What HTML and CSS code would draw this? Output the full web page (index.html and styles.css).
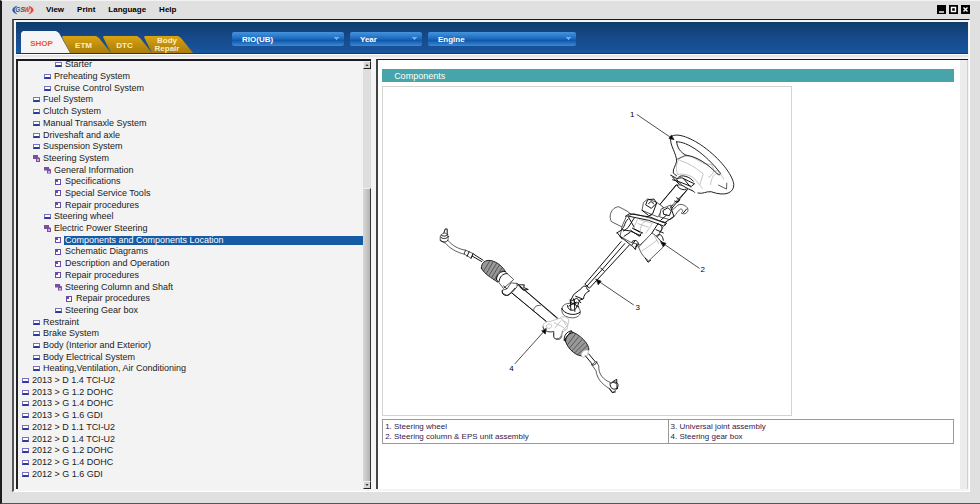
FILE: index.html
```
<!DOCTYPE html>
<html lang="en">
<head>
    <meta charset="UTF-8">
    <meta name="viewport" content="width=device-width, initial-scale=1.0">
    <title>GSW - RIO(UB)</title>
    <link rel="stylesheet" href="styles.css">
</head>
<body>
    <div class="window">
        <header class="menubar">
            <svg class="logo" viewBox="0 0 66 30" role="img" aria-label="GSW">
                <path d="M15 3 C-3 9 -3 21 15 27 C5 20 5 10 15 3z" fill="#2a4f9e" stroke="#2a4f9e"/>
                <path d="M50 3 C69 9 69 21 50 27 C60 20 60 10 50 3z" fill="#e0453a" stroke="#e0453a"/>
                <text class="logo-blue" x="10" y="22">GS</text>
                <text class="logo-red" x="36" y="22">W</text>
            </svg>
            <nav class="menu">
                <a href="#">View</a>
                <a href="#">Print</a>
                <a href="#">Language</a>
                <a href="#">Help</a>
            </nav>
            <div class="window-buttons">
                <button aria-label="Minimize"><svg viewBox="0 0 9 9"><path d="M2 7h5"/></svg></button>
                <button aria-label="Maximize"><svg viewBox="0 0 9 9"><path d="M2.5 2.5h4v4h-4z"/></svg></button>
                <button aria-label="Close"><svg viewBox="0 0 9 9"><path d="M2.5 2.5l4 4M6.5 2.5l-4 4"/></svg></button>
            </div>
        </header>

        <div class="frame">
            <div class="toolbar">
                <nav class="tabs">
                    <a class="tab active" href="#">SHOP</a>
                    <a class="tab" href="#">ETM</a>
                    <a class="tab" href="#">DTC</a>
                    <a class="tab two-lines" href="#">Body<br>Repair</a>
                </nav>
                <form class="filters">
                    <select class="model" aria-label="Model"><option>RIO(UB)</option></select>
                    <select class="year" aria-label="Year"><option>Year</option></select>
                    <select class="engine" aria-label="Engine"><option>Engine</option></select>
                </form>
            </div>

            <div class="panels">
                <aside class="sidebar">
                    <ul class="tree">
                        <li class="level-3 book"><a href="#">Starter</a></li>
                        <li class="level-2 book"><a href="#">Preheating System</a></li>
                        <li class="level-2 book"><a href="#">Cruise Control System</a></li>
                        <li class="level-1 book"><a href="#">Fuel System</a></li>
                        <li class="level-1 book"><a href="#">Clutch System</a></li>
                        <li class="level-1 book"><a href="#">Manual Transaxle System</a></li>
                        <li class="level-1 book"><a href="#">Driveshaft and axle</a></li>
                        <li class="level-1 book"><a href="#">Suspension System</a></li>
                        <li class="level-1 open"><a href="#">Steering System</a></li>
                        <li class="level-2 open"><a href="#">General Information</a></li>
                        <li class="level-3 page"><a href="#">Specifications</a></li>
                        <li class="level-3 page"><a href="#">Special Service Tools</a></li>
                        <li class="level-3 page"><a href="#">Repair procedures</a></li>
                        <li class="level-2 book"><a href="#">Steering wheel</a></li>
                        <li class="level-2 open"><a href="#">Electric Power Steering</a></li>
                        <li class="level-3 page selected"><a href="#">Components and Components Location</a></li>
                        <li class="level-3 page"><a href="#">Schematic Diagrams</a></li>
                        <li class="level-3 page"><a href="#">Description and Operation</a></li>
                        <li class="level-3 page"><a href="#">Repair procedures</a></li>
                        <li class="level-3 open"><a href="#">Steering Column and Shaft</a></li>
                        <li class="level-4 page"><a href="#">Repair procedures</a></li>
                        <li class="level-3 book"><a href="#">Steering Gear box</a></li>
                        <li class="level-1 book"><a href="#">Restraint</a></li>
                        <li class="level-1 book"><a href="#">Brake System</a></li>
                        <li class="level-1 book"><a href="#">Body (Interior and Exterior)</a></li>
                        <li class="level-1 book"><a href="#">Body Electrical System</a></li>
                        <li class="level-1 book"><a href="#">Heating,Ventilation, Air Conditioning</a></li>
                        <li class="level-0 book"><a href="#">2013 &gt; D 1.4 TCI-U2</a></li>
                        <li class="level-0 book"><a href="#">2013 &gt; G 1.2 DOHC</a></li>
                        <li class="level-0 book"><a href="#">2013 &gt; G 1.4 DOHC</a></li>
                        <li class="level-0 book"><a href="#">2013 &gt; G 1.6 GDI</a></li>
                        <li class="level-0 book"><a href="#">2012 &gt; D 1.1 TCI-U2</a></li>
                        <li class="level-0 book"><a href="#">2012 &gt; D 1.4 TCI-U2</a></li>
                        <li class="level-0 book"><a href="#">2012 &gt; G 1.2 DOHC</a></li>
                        <li class="level-0 book"><a href="#">2012 &gt; G 1.4 DOHC</a></li>
                        <li class="level-0 book"><a href="#">2012 &gt; G 1.6 GDI</a></li>
                    </ul>
                    <div class="scrollbar">
                        <button aria-label="Scroll up"><svg viewBox="0 0 8 8"><path d="M2 5h4L4 3z"/></svg></button>
                        <div class="track"><div class="thumb"></div></div>
                        <button aria-label="Scroll down"><svg viewBox="0 0 8 8"><path d="M2 3h4L4 5z"/></svg></button>
                    </div>
                </aside>

                <main class="content">
                    <div class="document">
                        <h1>Components</h1>
                        <svg class="diagram" viewBox="0 0 1227 987" role="img" aria-label="Steering system components">
                            <!-- steering wheel, column and EPS unit -->
                            <g transform="translate(621 9)">
                                <path class="soft" d="M270 207 C282 198 300 196 315 205 L345 222 L366 224 M270 207 C260 222 258 240 266 254 M366 224 C380 238 372 258 358 262 M376 244 C384 240 394 246 396 256 L404 268 M272 212 C300 220 320 235 342 252 L332 284 M266 254 C280 250 310 256 320 272 L340 296 M364 284 C366 262 378 248 388 250"/>
                                <path class="rim" d="M244 142 C256 126 300 140 342 170 C392 206 430 254 434 284 C435 308 410 322 366 306 C350 304 342 314 326 310 M244 142 C240 166 262 190 262 214 C260 228 250 236 252 250 L262 258"/>
                                <path class="rim" d="M262 156 C294 154 350 194 392 248 C396 254 390 258 384 252 C356 222 322 200 290 196 C274 188 264 174 262 156z"/>
                                <path class="line" d="M264 208 L290 196 M388 286 L412 298 L413 280"/>
                                <path class="bold" d="M244 256 L262 266 L278 264 L298 274 L316 282 L306 290 L290 284 L270 276 L250 270 M268 262 C276 252 304 262 312 274 M262 268 C270 286 294 296 312 304 L316 308 M284 268 L304 292 M250 262 L270 284"/>
                                <path class="line" fill="#fff" d="M262 286 L210 346 L234 362 L294 300 C286 288 274 284 262 286z"/>
                                <path class="bold" d="M260 286 L184 378 M294 300 L226 382 M264 286 C266 296 276 300 290 300 M262 324 L272 330 L266 338 L256 334"/>
                                <path class="line" fill="#fff" d="M176 328 L202 338 L222 352 L206 382 L158 362 L162 340z"/>
                                <path class="bold" d="M176 330 L194 328 L202 340 L186 356 L170 346z M178 342 C180 334 192 334 192 342 M202 340 L190 372 L172 382 M158 362 L176 376"/>
                                <path class="line" fill="#fff" d="M216 358 L244 346 L250 360 L262 350 C270 338 292 346 296 358 C298 370 284 376 276 370 C282 366 282 358 274 358 C262 364 258 384 242 390 L212 382z"/>
                                <path class="bold" d="M222 362 L236 354 L246 364 L240 378 L224 374z M244 352 L254 380 L228 398 M232 376 L214 392 M282 370 L292 358 M246 350 L250 346"/>
                                <path class="line" fill="#fff" d="M116 366 L88 351 C66 352 56 380 66 396 L106 416 L128 382z"/>
                                <path class="line" fill="#fff" d="M112 380 L132 372 L178 384 L228 400 L218 418 L202 446 L184 438 L152 466 L124 458 L92 440 L98 410z"/>
                                <path class="bold" d="M108 380 L120 372 L182 382 L222 398 M120 380 L178 392 L220 408 M134 386 C124 400 116 420 102 424 M116 388 C104 398 106 414 98 418 M82 430 L98 420 L122 424 L154 438 M92 440 L126 468 L138 452 M122 428 L104 440 M130 416 L160 430 M124 422 L150 440 L156 430 L130 416 M220 396 L232 400 L226 408 M84 430 L98 448 M128 468 L138 480 L142 464 M116 380 L134 412"/>
                                <path class="soft" d="M144 390 L132 416 M170 392 C154 404 150 418 154 430 M190 400 L170 430 M150 390 L186 400 M146 402 L176 412"/>
                                <path class="bold" d="M184 436 L206 402 C220 408 222 416 212 428 M200 420 L222 430 M202 438 C214 430 220 438 222 452 M192 434 L226 464"/>
                                <path class="line" fill="#fff" d="M148 472 L188 430 C200 438 218 454 222 472 L178 514 C164 504 154 492 148 472z"/>
                                <path class="soft" d="M158 484 C176 472 188 464 202 452 M196 440 L208 462"/>
                                <path class="bold" d="M128 456 C136 448 150 454 146 468 L138 472 M168 506 L176 518 L184 512"/>
                            </g>

                            <!-- intermediate shaft, boot and right tie rod -->
                            <g transform="translate(441 489)">
                                <path class="bold" fill="#fff" d="M275 -24 L166 104 L180 116 L300 -14"/>
                                <path class="bold" d="M286 -18 L218 60 L172 110 M214 56 L224 64"/>
                                <path class="bold" fill="#fff" d="M156 116 C160 106 174 108 172 118 L180 124 C170 128 162 138 162 148 L150 152 L142 178 L122 174 L124 152 L132 136z"/>
                                <path class="bold" d="M126 154 L142 146 L154 160 M132 148 L140 174 M122 158 L148 172 M138 140 L158 148 M128 162 L144 160"/>
                                <path class="line" fill="#fff" d="M97 178 C98 164 116 158 132 164 C146 168 154 182 152 192 C148 206 126 208 112 202 C100 198 96 190 97 178z"/>
                                <path class="bold" d="M97 178 C104 194 136 202 152 188 M114 168 C112 184 140 190 142 170 M122 150 L124 182 M134 150 L136 186 M118 170 L140 158"/>
                                <path class="soft" fill="#fff" d="M94 204 C100 198 116 204 118 212 L112 240 L92 252 L78 234 L90 230z"/>
                                <path class="soft" d="M90 216 C96 210 110 216 114 224 M86 232 L108 240 M82 228 L98 246"/>
                                <path class="line" fill="#fff" d="M72 250 L74 264 C80 274 94 272 96 262 L98 246"/>
                                <path class="boot" d="M106 270 L124 246 C150 254 180 284 178 302 L156 320 C132 316 112 294 106 270z"/>
                                <path class="bold" d="M104 274 C102 258 112 246 126 244 M108 276 C108 262 116 252 130 250"/>
                                <path class="ribs" d="M114 286 L138 254 M120 296 L148 262 M128 304 L158 270 M136 310 L166 280 M144 316 L174 288"/>
                                <path class="soft" fill="#fff" d="M156 320 C152 308 168 298 178 304 L174 318 L162 324z"/>
                                <path class="bold" d="M168 320 L188 344 M178 314 L198 338"/>
                                <path class="line" fill="#fff" d="M188 346 L200 336 L208 350 C206 374 222 392 244 400 L250 398 L262 404 L262 420 L250 430 L240 418 C216 404 202 386 200 366z"/>
                                <path class="bold" d="M242 402 C240 416 252 426 264 416 M246 402 C250 394 264 398 266 406 L264 418 M252 396 L262 390 L262 402 M240 418 L248 430 L258 428 M186 346 C190 350 200 346 202 338"/>
                            </g>

                            <!-- left tie rod and gear box -->
                            <g transform="translate(141 369)">
                                <path class="line" fill="#fff" d="M31 92 C30 78 34 72 44 70 C56 72 56 84 54 92 C70 110 86 118 108 122 L104 134 C78 128 58 114 48 102z"/>
                                <path class="bold" d="M42 70 L46 58 L52 58 L52 72 M32 82 C38 90 50 88 56 80 M32 92 C40 100 50 98 54 92 M34 76 C40 82 50 80 54 74"/>
                                <path class="line" fill="#fff" d="M108 122 L130 132 L124 146 L104 134z"/>
                                <path class="bold" d="M118 126 L112 140 M130 132 L124 146 M128 140 L156 156 M132 134 L160 152"/>
                                <path class="boot" d="M155 176 C154 160 166 150 184 153 C204 158 220 172 228 188 L204 218 C184 204 164 194 155 176z"/>
                                <path class="ribs" d="M162 184 L180 154 M170 192 L190 156 M178 198 L200 162 M186 204 L208 168 M194 210 L216 176"/>
                                <path class="line" fill="#fff" d="M200 208 C198 194 212 180 226 186 L252 210 L222 236z"/>
                                <path class="bold" d="M200 210 C202 194 212 184 226 186 M208 216 C210 202 218 192 232 192"/>
                                <path class="line" fill="#fff" d="M266 226 L386 330 L362 346 L246 250z"/>
                                <path class="bold" d="M222 230 L362 346 M262 222 L384 326"/>
                                <path class="line" d="M312 304 C312 292 322 286 332 288"/>
                                <path class="line" fill="#fff" d="M218 242 L232 238 L244 220 L262 222 L262 232 L248 248 L232 258 L220 252z"/>
                                <path class="bold" d="M218 244 C214 254 228 262 238 256 L256 236 M268 226 L284 226 L282 234 L296 240 L280 242 L270 232"/>
                                <path class="soft" fill="#fff" d="M341 354 C336 344 350 334 362 336 L392 326 C402 330 404 342 412 350 L398 364 L392 386 L374 388 L374 366 C360 374 344 366 341 354z"/>
                                <path class="soft" d="M350 350 C352 340 370 342 366 352 C362 360 350 358 350 350z M374 340 L402 354 M376 356 L394 334"/>
                                <path class="line" d="M340 352 C340 364 356 370 372 366 M372 370 L372 382 C376 392 390 390 394 382"/>
                            </g>

                            <!-- callouts -->
                            <g class="callout">
                                <path d="M764 83 L864 151 M951 545 L846 473 M753 655 L651 586 M397 832 L484 735"/>
                                <path class="arrow" d="M874 158 L860 155 L867 145z M836 466 L851 470 L844 480z M641 578 L656 584 L648 594z M491 727 L488 743 L478 734z"/>
                                <text x="743" y="91">1</text>
                                <text x="955" y="557">2</text>
                                <text x="759" y="670">3</text>
                                <text x="380" y="853">4</text>
                            </g>
                        </svg>
                        <table class="legend">
                            <tr>
                                <td>1. Steering wheel<br>2. Steering column &amp; EPS unit assembly</td>
                                <td>3. Universal joint assembly<br>4. Steering gear box</td>
                            </tr>
                        </table>
                    </div>
                    <div class="content-scroll"></div>
                </main>
            </div>
        </div>
    </div>
</body>
</html>
```
FILE: styles.css
```
:root {
    --window: #dfe0df;
    --teal: #46a4aa;
    --tree-bg: #f3f3f3;
    --select-blue: #165ba3;
}

*,
*::before {
    box-sizing: border-box;
}

body {
    margin: 0;
    font-family: "Liberation Sans", Arial, sans-serif;
    font-size: 8px;
    color: #000;
}

a {
    color: inherit;
    text-decoration: none;
}

button {
    padding: 0;
    border: none;
    cursor: pointer;
}

button svg {
    display: block;
    width: 100%;
    height: 100%;
}

.window {
    display: flex;
    flex-direction: column;
    min-height: 100vh;
    padding: 0 10px 11px 10px;
    border-left: 2px solid #1c1d20;
    border-top: 1px solid #f2f2f2;
    border-bottom: 1px solid #555;
    background: var(--window);
}

/* menu bar */
.menubar {
    display: flex;
    align-items: center;
    height: 18px;
    padding-bottom: 1px;
}

.logo {
    width: 22px;
    height: 10px;
}

.logo text {
    font-size: 19px;
    font-weight: bold;
    font-style: italic;
}

.logo-blue {
    fill: #2a4f9e;
}

.logo-red {
    fill: #d8362f;
}

.menu {
    display: flex;
    gap: 13px;
    margin-left: 12px;
    font-size: 8px;
    font-weight: bold;
}

.window-buttons {
    display: flex;
    gap: 3px;
    margin-left: auto;
}

.window-buttons button {
    width: 9px;
    height: 9px;
    background: #000;
}

.window-buttons path {
    fill: none;
    stroke: #fff;
    stroke-width: 1.4;
}

/* frame */
.frame {
    display: flex;
    flex-direction: column;
    flex: 1;
    padding: 2px 1px 2px 2px;
    border: 1px solid #fff;
    border-top-color: #1c1822;
    border-left: 2px solid #555;
    background: #f4f4f4;
}

.toolbar {
    display: flex;
    align-items: flex-end;
    height: 32px;
    padding-left: 5px;
    border-bottom: 1px solid #12366a;
    background: linear-gradient(#0f3c6b, #17498a 50%, #17569e);
}

.tabs {
    display: flex;
    align-items: flex-end;
    width: 211px;
}

.tab {
    width: 49px;
    height: 17px;
    margin-right: -8px;
    padding-right: 6px;
    background: linear-gradient(#d9a30f, #a97c0c);
    color: #fbeec2;
    font-size: 8px;
    font-weight: bold;
    line-height: 20px;
    text-align: center;
    clip-path: polygon(0 1px, 1px 0, 34px 0, 37px 2px, 49px 100%, 8px 100%);
}

.tab.two-lines {
    padding-top: 1px;
    padding-right: 3px;
    line-height: 8px;
}

.tab.active {
    height: 22px;
    padding-right: 8px;
    background: #f5f5f5;
    color: #f0562a;
    line-height: 26px;
    clip-path: polygon(0 2px, 2px 0, 35px 0, 38px 2px, 49px 100%, 0 100%);
}

.filters {
    display: flex;
    gap: 6px;
    align-self: center;
    margin-top: 2px;
}

.filters select {
    appearance: none;
    height: 14px;
    padding: 1px 10px 0;
    border: none;
    border-radius: 2px;
    background:
        conic-gradient(from -45deg at 50% 100%, #6db0ec 90deg, transparent 0) right 5px center / 5px 3px no-repeat,
        linear-gradient(#4594dc, #1f6cc0 45%, #0f58ab 60%, #3a8ad6);
    color: #fff;
    font-family: inherit;
    font-size: 8px;
    font-weight: bold;
}

.filters .model {
    width: 112px;
}

.filters .year {
    width: 72px;
}

.filters .engine {
    width: 148px;
}

/* panels */
.panels {
    display: grid;
    grid-template-columns: 3fr 5fr;
    gap: 5px;
    flex: 1;
    padding-top: 5px;
    background: linear-gradient(#fff 1px, #e4e4e4 1px, #e4e4e4 3px, #f4f4f4 3px);
}

.sidebar {
    display: flex;
    border-top: 2px solid #1c1822;
    border-left: 2px solid #222;
    background: var(--tree-bg);
    overflow: hidden;
}

.tree {
    display: grid;
    grid-auto-rows: 1fr;
    flex: 1;
    margin: -2px 0 0;
    padding: 0 0 9px 4px;
    list-style: none;
    font-size: 9px;
    color: #222;
}

.tree li {
    display: flex;
    align-items: center;
    gap: 2px;
    min-height: 11px;
}

.tree a {
    flex: 1;
    height: 9px;
    padding-left: 1px;
    line-height: 9px;
    white-space: nowrap;
}

.level-1 {
    padding-left: 11px;
}

.level-2 {
    padding-left: 22px;
}

.level-3 {
    padding-left: 33px;
}

.level-4 {
    padding-left: 44px;
}

.tree li::before {
    content: "";
    flex: none;
    width: 7px;
    height: 5px;
    border: 1px solid #5a4fa0;
    background: #fff;
}

.tree .book::before {
    border-color: #7a6fc0;
    border-bottom: 2px solid #2b3a9c;
}

.tree .page::before {
    width: 6px;
    height: 6px;
    margin-right: 1px;
    border-color: #6a4bab;
    background:
        linear-gradient(#6a4bab, #6a4bab) 0 0 / 2px 2px no-repeat,
        #fff;
}

.tree .open::before {
    height: 7px;
    border: none;
    background:
        linear-gradient(#c9a8dd, #c9a8dd) 4px 4px / 2px 2px no-repeat,
        #7b4f9f;
    clip-path: polygon(0 0, 5px 0, 5px 2px, 7px 3px, 7px 100%, 3px 100%, 3px 4px, 0 4px);
}

.tree .selected a {
    background: var(--select-blue);
    color: #fff;
}

.scrollbar {
    display: flex;
    flex-direction: column;
    width: 8px;
    background: #dedede;
}

.scrollbar button {
    height: 8px;
    border: 1px solid #222;
    border-top-color: #eee;
    border-left-color: #eee;
    background: #d4d4d4;
}

.track {
    display: flex;
    align-items: flex-end;
    flex: 1;
}

.thumb {
    width: 100%;
    height: 71%;
    border-top: 1px solid #eee;
    border-right: 1px solid #333;
    background: linear-gradient(to right, #d8d8d8, #b4b4b4);
}

/* document */
.content {
    display: flex;
    border-top: 1px solid #1c1822;
    border-left: 2px solid #444;
    background: #fff;
}

.document {
    flex: 1;
    padding: 9px 6px 0 4px;
}

.document h1 {
    height: 13px;
    margin: 0 0 4px;
    padding-left: 12px;
    background: var(--teal);
    color: #fff;
    font-size: 9px;
    font-weight: normal;
    line-height: 15px;
}

.diagram {
    display: block;
    width: 100%;
    max-width: 410px;
    border: 1px solid #d6d2d0;
}

.diagram path {
    stroke-linejoin: round;
    stroke-linecap: round;
}

.line,
.bold,
.soft,
.rim,
.ribs {
    fill: none;
    stroke: #333;
    stroke-width: 2.4;
}

.line[fill],
.bold[fill],
.soft[fill] {
    fill: #fff;
}

.rim {
    stroke: #222;
    stroke-width: 3;
}

.bold {
    stroke: #111;
    stroke-width: 3;
}

.soft {
    stroke: #b5b5b5;
}

.boot {
    fill: #999;
    stroke: #222;
    stroke-width: 3;
}

.ribs {
    stroke: #444;
}

.callout path {
    fill: none;
    stroke: #222;
    stroke-width: 2.4;
}

.callout .arrow {
    fill: #000;
}

.callout text {
    font-size: 24px;
}

.legend {
    width: 100%;
    margin-top: 3px;
    border-collapse: collapse;
    table-layout: fixed;
    color: #35204a;
    font-size: 8px;
    line-height: 10px;
}

.legend td {
    padding: 2px 2px 1px;
    border: 1px solid #999;
}

.content-scroll {
    width: 8px;
    background: #ececec;
    border-right: 1px solid #d0d0d0;
}
```
